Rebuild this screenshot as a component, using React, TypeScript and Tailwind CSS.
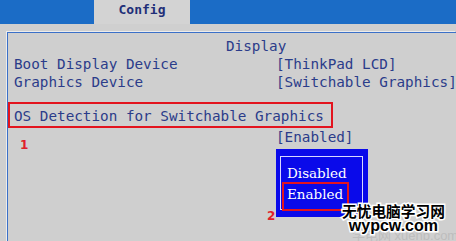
import React from "react"

function App() {
    return (
        <div className="relative w-[456px] h-[241px] overflow-hidden bg-[#cfcfcf] font-['DejaVu_Sans_Mono',monospace] text-[#2b3c8a]">
            {/* top menu bar */}
            <div className="flex h-[24px] bg-[#1b6cc6]">
                <div className="ml-[94px] w-[96px] h-full bg-[#d3d3d3] flex justify-center pt-[1px] leading-[18px] text-[13px] font-bold text-[#1f2f78]">
                    Config
                </div>
            </div>

            {/* panel */}
            <div className="mt-[8px] ml-[7px] h-[220px] border-l border-t border-[#3b70c8] shadow-[-1px_-1px_0_#ececec] pt-[4px] text-[14.3px] leading-[18px]">
                <div className="pl-[218px]">Display</div>
                <div className="grid grid-cols-[262px_auto] pl-[6px]">
                    <div>Boot Display Device</div>
                    <div>[ThinkPad LCD]</div>
                    <div>Graphics Device</div>
                    <div className="whitespace-nowrap">[Switchable Graphics]</div>
                </div>

                <div className="mt-[11px] w-[325px] h-[26px] border-2 border-[#e3141e] pl-[4px] pt-[3px] whitespace-nowrap">
                    OS Detection for Switchable Graphics
                </div>

                <div className="grid grid-cols-[262px_auto] pl-[6px]">
                    <div className="pl-[6px] mt-[10.5px] font-['DejaVu_Sans',sans-serif] font-bold text-[12px] leading-[12px] text-[#e0202a]">1</div>
                    <div>
                        <div>[Enabled]</div>
                        <div className="mt-[3px] w-[92px] h-[68px] bg-[#0a0aea] pt-[7px] pl-[4px] pr-[5px] pb-[7px]">
                            <div className="h-full border border-[#d8d8ff] pl-[6px] pt-[6px] font-['DejaVu_Serif',serif] text-[13.5px] leading-[20px] text-white">
                                <div>Disabled</div>
                                <div className="relative mt-[1px]">
                                    Enabled
                                    <div className="absolute left-[-5px] top-[-2px] w-[67px] h-[29px] border-2 border-[#e3141e]"></div>
                                </div>
                            </div>
                        </div>
                    </div>
                </div>
            </div>

            {/* annotation 2 */}
            <div className="absolute left-[267px] top-[210px] font-['DejaVu_Sans',sans-serif] font-bold text-[12px] leading-[12px] text-[#e0202a]">2</div>

            {/* watermark */}
            <div className="absolute left-[352px] top-[229px] text-[13px] leading-[14px] text-[#bdbdbd] font-['Liberation_Sans','Noto_Sans_CJK_SC',sans-serif] whitespace-nowrap">
                学电网 xuenb.com
            </div>
            <div className="absolute left-[342px] top-[202px] flex flex-col items-center whitespace-nowrap text-black font-bold [paint-order:stroke_fill] [-webkit-text-stroke:3px_white]">
                <div className="text-[14.7px] leading-[17px] font-['Noto_Sans_CJK_SC',sans-serif]">无忧电脑学习网</div>
                <div className="text-[16px] leading-[14px] font-['Liberation_Sans',sans-serif]">wypcw.com</div>
            </div>
        </div>
    )
}

export default App
